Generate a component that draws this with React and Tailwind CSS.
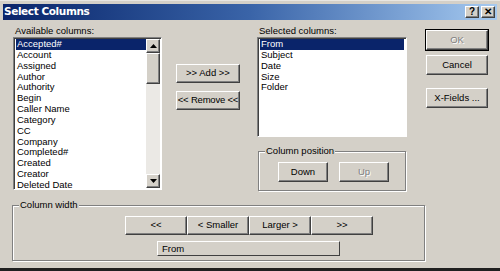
import React from 'react'

const raised = 'bg-[#d4d0c8] border border-t-white border-l-white border-r-[#404040] border-b-[#404040] shadow-[inset_-1px_-1px_0_#808080]'
const sunken = 'bg-white border border-t-[#808080] border-l-[#808080] border-r-white border-b-white shadow-[inset_1px_1px_0_#404040]'

const available = [
  'Accepted#', 'Account', 'Assigned', 'Author', 'Authority', 'Begin', 'Caller Name',
  'Category', 'CC', 'Company', 'Completed#', 'Created', 'Creator', 'Deleted Date',
]
const selected = ['From', 'Subject', 'Date', 'Size', 'Folder']

function Btn({ children, className = '', disabled }) {
  return (
    <div className={`${raised} flex items-center justify-center whitespace-nowrap ${disabled ? 'text-[#808080] [text-shadow:1px_1px_0_white]' : 'text-black'} ${className}`}>
      {children}
    </div>
  )
}

function Group({ title, className = '', children }) {
  return (
    <div className={`relative border border-[#808080] shadow-[1px_1px_0_white,inset_1px_1px_0_white] ${className}`}>
      <span className="absolute left-[6px] top-[-7px] bg-[#d4d0c8] px-[1px] leading-[12px]">{title}</span>
      {children}
    </div>
  )
}

function Arrow({ up }) {
  return (
    <div className={`${raised} w-[14px] h-[14px] flex items-center justify-center`}>
      <svg width="7" height="4" viewBox="0 0 7 4">
        {up ? <path d="M3.5 0 L7 4 L0 4 Z" fill="black" /> : <path d="M0 0 L7 0 L3.5 4 Z" fill="black" />}
      </svg>
    </div>
  )
}

export default function App() {
  return (
    <div className="w-[500px] h-[271px] bg-[#d4d0c8] flex flex-col px-[3px] pt-[3px] text-[9.5px] text-black font-['Liberation_Sans',Arial,sans-serif] border-b-[3px] border-b-[#202020] border-t border-t-[#e8e6e2]">
      {/* title bar */}
      <div className="h-[16px] shrink-0 flex items-center bg-gradient-to-r from-[#0a246a] via-[#3a64a8] to-[#a6caf0] pl-[1px] pr-[2px]">
        <span className="text-white font-bold text-[10.5px] font-['DejaVu_Sans',sans-serif] tracking-[-0.4px]">Select Columns</span>
        <div className="ml-auto flex gap-[2px]">
          <div className={`${raised} w-[14px] h-[12px] flex items-center justify-center font-bold text-[10px] leading-none`}>?</div>
          <div className={`${raised} w-[14px] h-[12px] flex items-center justify-center font-bold text-[10px] leading-none`}>✕</div>
        </div>
      </div>

      {/* top area */}
      <div className="flex h-[181px] shrink-0 pl-[10px]">
        {/* available */}
        <div className="w-[149px] pt-[5px] flex flex-col">
          <div className="h-[12px] leading-[12px] pl-[2px]">Available columns:</div>
          <div className={`${sunken} h-[153px] flex pl-[2px] pt-[1px] pr-[1px] pb-[1px]`}>
            <div className="flex-1 flex flex-col">
              {available.map((a, i) => (
                <div key={a} className={`h-[10.85px] leading-[10.85px] pl-[1px] ${i === 0 ? 'bg-[#0a246a] text-white' : ''}`}>{a}</div>
              ))}
            </div>
            <div className="w-[14px] flex flex-col bg-[#ebe9e5]">
              <Arrow up />
              <div className={`${raised} h-[31px]`} />
              <div className="flex-1" />
              <Arrow />
            </div>
          </div>
        </div>

        {/* add / remove */}
        <div className="w-[64px] ml-[14px] pt-[44px] flex flex-col gap-[8px]">
          <Btn className="h-[19px]">&gt;&gt; Add &gt;&gt;</Btn>
          <Btn className="h-[19px] tracking-[-0.2px]">&lt;&lt; Remove &lt;&lt;</Btn>
        </div>

        {/* selected */}
        <div className="w-[150px] ml-[17px] pt-[5px] flex flex-col">
          <div className="h-[12px] leading-[12px] pl-[2px]">Selected columns:</div>
          <div className={`${sunken} h-[100px] pl-[2px] pt-[1px] pr-[2px]`}>
            {selected.map((s, i) => (
              <div key={s} className={`h-[10.85px] leading-[10.85px] pl-[1px] ${i === 0 ? 'bg-[#0a246a] text-white' : ''}`}>{s}</div>
            ))}
          </div>
          <Group title="Column position" className="mt-[14px] mx-[1px] h-[40px] flex gap-[11px] pl-[19px] pt-[10px]">
            <Btn className="w-[50px] h-[20px]">Down</Btn>
            <Btn className="w-[50px] h-[20px]" disabled>Up</Btn>
          </Group>
        </div>

        {/* ok / cancel */}
        <div className="w-[62px] ml-[19px] pt-[10px] flex flex-col">
          <Btn className="h-[20px] outline outline-1 outline-black" disabled>OK</Btn>
          <Btn className="h-[20px] mt-[5px]">Cancel</Btn>
          <Btn className="h-[20px] mt-[13px]">X-Fields ...</Btn>
        </div>
      </div>

      {/* column width */}
      <div className="pl-[9px] pt-[4px]">
        <Group title="Column width" className="w-[413px] h-[56px] flex flex-col items-start pt-[10px]">
          <div className="flex ml-[112px]">
            <Btn className="w-[62px] h-[19px]">&lt;&lt;</Btn>
            <Btn className="w-[62px] h-[19px]">&lt; Smaller</Btn>
            <Btn className="w-[62px] h-[19px]">Larger &gt;</Btn>
            <Btn className="w-[62px] h-[19px]">&gt;&gt;</Btn>
          </div>
          <div className={`${raised} shadow-none ml-[144px] mt-[6px] w-[183px] h-[15px] leading-[13px] pl-[4px]`}>From</div>
        </Group>
      </div>
    </div>
  )
}
